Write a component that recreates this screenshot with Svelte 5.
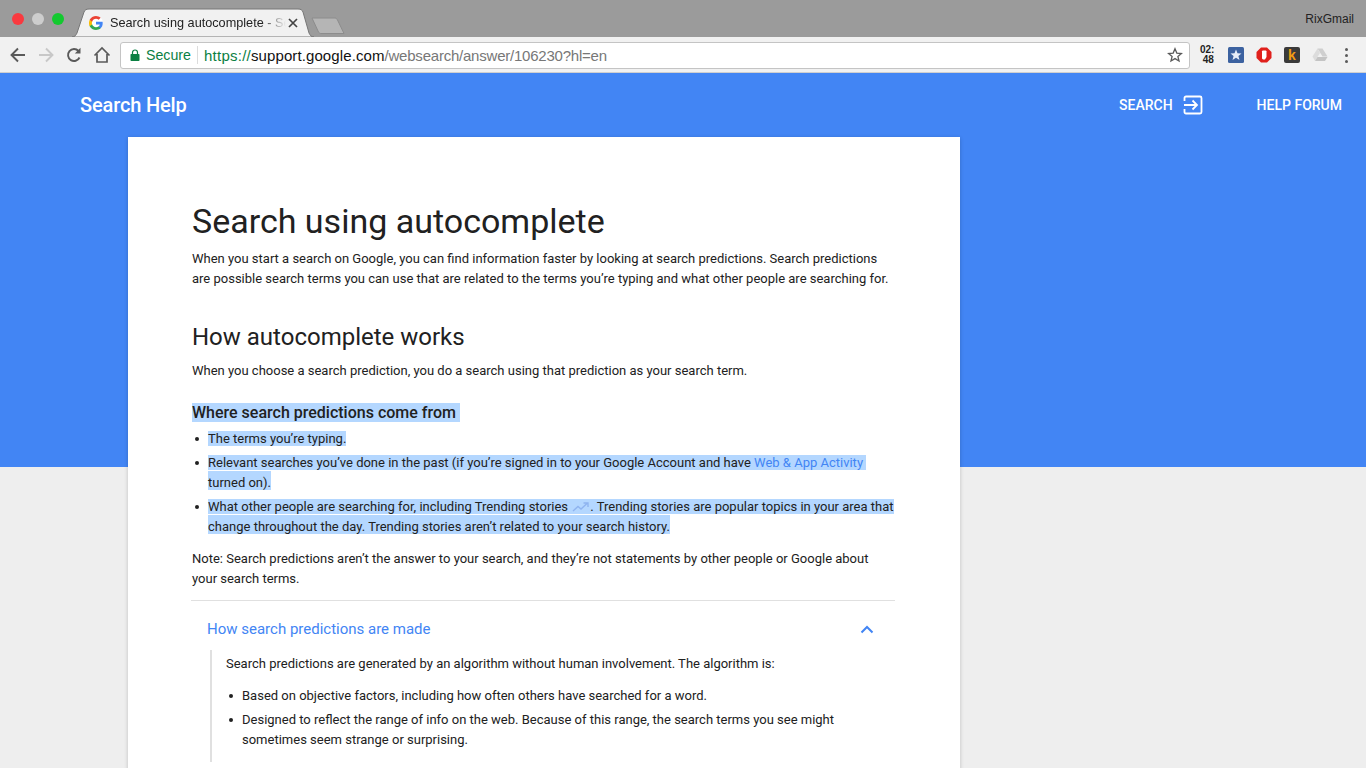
<script>
  const extraLines = [
    'Based on objective factors, including how often others have searched for a word.',
    'Designed to reflect the range of info on the web. Because of this range, the search terms you see might sometimes seem strange or surprising.'
  ];
</script>

<div class="browser">
  <div class="tabbar">
    <div class="lights">
      <span class="light red"></span>
      <span class="light grey"></span>
      <span class="light green"></span>
    </div>
    <div class="tab">
      <svg class="tab-shape" width="242" height="29" viewBox="0 0 242 29">
        <path d="M0 29C3 29 4 27 5 25L12 4C13 2 14 1 17 1H226C229 1 230 2 231 4L237 25C238 27 239 29 242 29Z" fill="#f1f1f1" stroke="#777" stroke-width="1"/>
      </svg>
      <svg class="favicon" width="14" height="14" viewBox="0 0 24 24">
        <circle cx="12" cy="12" r="12" fill="#fff"/>
        <path fill="#4285f4" d="M23.500 12.300c0-.8-.1-1.600-.2-2.300H12v4.500h6.500c-.3 1.500-1.100 2.700-2.400 3.600v3h3.900c2.200-2.100 3.500-5.100 3.500-8.800z"/>
        <path fill="#34a853" d="M12 24c3.200 0 6-1.100 8-2.900l-3.900-3c-1.100.7-2.500 1.200-4.100 1.200-3.100 0-5.800-2.100-6.700-5H1.200v3.100C3.200 21.300 7.300 24 12 24z"/>
        <path fill="#fbbc05" d="M5.300 14.300c-.5-1.500-.5-3.100 0-4.600V6.600H1.200c-1.700 3.300-1.700 7.500 0 10.800z"/>
        <path fill="#ea4335" d="M12 4.700c1.800 0 3.300.6 4.600 1.800l3.400-3.400C17.900 1.200 15.200 0 12 0 7.300 0 3.200 2.700 1.200 6.600l4.100 3.100c.9-2.900 3.600-5 6.700-5z"/>
      </svg>
      <span class="tab-title">Search using autocomplete - Search Help</span>
      <svg class="tab-close" width="10" height="10" viewBox="0 0 10 10">
        <path d="M1 1L9 9M9 1L1 9" stroke="#444" stroke-width="1.700" fill="none"/>
      </svg>
    </div>
    <svg class="newtab" width="36" height="18" viewBox="0 0 36 18">
      <path d="M1 1H24C25 1 26 2 26.500 3L33 16.500H10C9 16.500 8 16 7.500 15Z" fill="#b5b5b5" stroke="#8c8c8c"/>
    </svg>
    <span class="profile">RixGmail</span>
  </div>

  <div class="toolbar">
    <svg class="nav first" width="18" height="18" viewBox="0 0 18 18">
      <path d="M16 9H3M9 2.500L2.500 9L9 15.500" stroke="#5a5a5a" stroke-width="1.900" fill="none"/>
    </svg>
    <svg class="nav" width="18" height="18" viewBox="0 0 18 18">
      <path d="M2 9H15M9 2.500L15.500 9L9 15.500" stroke="#c8c8c8" stroke-width="1.900" fill="none"/>
    </svg>
    <svg class="nav" width="18" height="18" viewBox="0 0 18 18">
      <path d="M14.500 11.500A6 6 0 1 1 13.500 5" stroke="#5a5a5a" stroke-width="1.900" fill="none"/>
      <path d="M15.500 1.800V7.500H9.800Z" fill="#5a5a5a"/>
    </svg>
    <svg class="nav" width="18" height="18" viewBox="0 0 18 18">
      <path d="M1.500 9.500L9 2L16.500 9.500M4 8V16H14V8" stroke="#5a5a5a" stroke-width="1.700" fill="none"/>
    </svg>
    <div class="omnibox">
      <svg class="lock" width="10" height="12" viewBox="0 0 10 12">
        <path d="M2.500 5V3.500a2.500 2.500 0 0 1 5 0V5" stroke="#0b8043" stroke-width="1.200" fill="none"/>
        <rect x="0.500" y="5" width="9" height="7" rx="0.800" fill="#0b8043"/>
      </svg>
      <span class="secure">Secure</span>
      <span class="sep"></span>
      <span class="url"><span class="https">https://</span><span class="host">support.google.com</span><span class="path">/websearch/answer/106230?hl=en</span></span>
      <svg class="star" width="16" height="16" viewBox="0 0 16 16">
        <path d="M8 1.800L9.800 6.100L14.400 6.500L10.900 9.500L12 14L8 11.600L4 14L5.100 9.500L1.600 6.500L6.200 6.100Z" stroke="#5a5a5a" stroke-width="1.300" fill="none"/>
      </svg>
    </div>
    <div class="extensions">
      <span class="clock">02:<br />&nbsp;48</span>
      <svg class="ext" width="16" height="16" viewBox="0 0 16 16">
        <rect width="16" height="16" rx="1.500" fill="#3c62a0"/>
        <path d="M8 2.500L9.500 6.300L13.500 6.500L10.400 9L11.500 13L8 10.800L4.500 13L5.600 9L2.500 6.500L6.500 6.300Z" fill="#e8eef8"/>
      </svg>
      <svg class="ext" width="16" height="16" viewBox="0 0 16 16">
        <path d="M5 .5H11L15.500 5V11L11 15.500H5L.5 11V5Z" fill="#e0201c"/>
        <path d="M6 11.500V5a1 1 0 0 1 1-1.500h2.500a1 1 0 0 1 1 1.500V10L9 12.500H7Z" fill="#fff"/>
      </svg>
      <span class="k-ext">k</span>
      <svg class="ext" width="16" height="14" viewBox="0 0 16 14">
        <path d="M5.500 .5H10.500L15.500 8.500H10.500Z" fill="#cfcfcf"/>
        <path d="M5.500 .5L.5 8.500L3 13L8 5Z" fill="#dcdcdc"/>
        <path d="M5.500 9H15.500L13 13H3Z" fill="#c4c4c4"/>
      </svg>
      <span class="dots"><i></i><i></i><i></i></span>
    </div>
  </div>
</div>

<div class="page">
  <header class="help-header">
    <a class="help-title" href="#top">Search Help</a>
    <div class="help-actions">
      <span class="action">SEARCH</span>
      <svg class="search-icon" width="20" height="20" viewBox="0 0 20 20">
        <path d="M1.500 6V3a1.500 1.500 0 0 1 1.500-1.500H17A1.500 1.500 0 0 1 18.500 3V17A1.500 1.500 0 0 1 17 18.500H3A1.500 1.500 0 0 1 1.500 17V14" stroke="#fff" stroke-width="1.800" fill="none"/>
        <path d="M1 10H13.500M9.500 5.500L14 10L9.500 14.500" stroke="#fff" stroke-width="1.800" fill="none"/>
      </svg>
      <span class="action forum">HELP FORUM</span>
    </div>
  </header>

  <article class="card">
    <h1>Search using autocomplete</h1>
    <p class="intro">When you start a search on Google, you can find information faster by looking at search predictions. Search predictions are possible search terms you can use that are related to the terms you’re typing and what other people are searching for.</p>

    <h2>How autocomplete works</h2>
    <p>When you choose a search prediction, you do a search using that prediction as your search term.</p>

    <h3><mark>Where search predictions come from&nbsp;</mark></h3>
    <ul class="selected">
      <li><mark>The terms you’re typing.</mark></li>
      <li><mark>Relevant searches you’ve done in the past (if you’re signed in to your Google Account and have <a href="#top">Web &amp; App Activity</a>&nbsp;</mark><br /><mark class="cont">turned on).</mark></li>
      <li><mark>What other people are searching for, including Trending stories <svg class="trend" width="18" height="10" viewBox="0 0 18 10"><path d="M1 9L6 4.500L9 7L15 1.500M11.500 1H16V5" stroke="#8fb4f0" stroke-width="1.400" fill="none"/></svg>. Trending stories are popular topics in your area that</mark><br /><mark class="cont">change throughout the day. Trending stories aren’t related to your search history.</mark></li>
    </ul>

    <p class="note">Note: Search predictions aren’t the answer to your search, and they’re not statements by other people or Google about your search terms.</p>

    <section class="accordion">
      <div class="accordion-head">
        <span>How search predictions are made</span>
        <svg width="14" height="9" viewBox="0 0 14 9">
          <path d="M1.500 7.500L7 2L12.500 7.500" stroke="#4285f4" stroke-width="2" fill="none"/>
        </svg>
      </div>
      <div class="accordion-body">
        <p>Search predictions are generated by an algorithm without human involvement. The algorithm is:</p>
        <ul>
          {#each extraLines as line}
            <li>{line}</li>
          {/each}
        </ul>
      </div>
    </section>
  </article>
</div>

<style>
  :global(body) {
    margin: 0;
    height: 768px;
    overflow: hidden;
    background: #eee;
    font-family: Roboto, "Liberation Sans", sans-serif;
  }

  .tabbar {
    display: flex;
    align-items: flex-end;
    height: 37px;
    background: #9b9b9b;
    position: relative;
  }

  .lights {
    display: flex;
    gap: 8px;
    align-self: flex-start;
    margin: 13px 0 0 12px;
  }

  .light {
    width: 12px;
    height: 12px;
    border-radius: 50%;
  }

  .red { background: #f9393f; }
  .grey { background: #cdcdcd; }
  .green { background: #13c92f; }

  .tab {
    position: relative;
    display: flex;
    align-items: center;
    width: 242px;
    height: 29px;
    margin-left: 8px;
    flex-shrink: 0;
  }

  .tab-shape {
    position: absolute;
    left: 0;
    top: 0;
  }

  .favicon {
    position: relative;
    margin-left: 17px;
    flex-shrink: 0;
  }

  .tab-title {
    position: relative;
    width: 176px;
    margin-left: 7px;
    overflow: hidden;
    white-space: nowrap;
    font-family: "Liberation Sans", Arial, sans-serif;
    font-size: 12.700px;
    color: #222;
    -webkit-mask-image: linear-gradient(to right, #000 86%, transparent 100%);
    mask-image: linear-gradient(to right, #000 86%, transparent 100%);
  }

  .tab-close {
    position: relative;
    margin-left: 2px;
    flex-shrink: 0;
  }

  .newtab {
    align-self: flex-end;
    margin: 0 0 2px -3px;
  }

  .profile {
    margin-left: auto;
    align-self: flex-start;
    margin-top: 12px;
    padding-right: 12px;
    font-family: "Liberation Sans", Arial, sans-serif;
    font-size: 12px;
    color: #222;
  }

  .toolbar {
    display: flex;
    align-items: center;
    height: 36px;
    background: #f1f1f1;
    box-shadow: inset 0 -1px 0 #cfcfcf;
  }

  .nav {
    margin-left: 10px;
    flex-shrink: 0;
  }

  .nav.first {
    margin-left: 9px;
  }

  .omnibox {
    display: flex;
    align-items: center;
    width: 1070px;
    height: 27px;
    margin-left: 9px;
    background: #fff;
    border: 1px solid #c4c4c4;
    border-radius: 3px;
    box-sizing: border-box;
    font-family: "Liberation Sans", Arial, sans-serif;
    font-size: 15px;
  }

  .lock {
    margin-left: 9px;
  }

  .secure {
    margin-left: 6px;
    font-size: 14.200px;
    color: #0b8043;
  }

  .sep {
    width: 1px;
    height: 18px;
    margin: 0 6px;
    background: #dcdcdc;
  }

  .url {
    white-space: nowrap;
  }

  .https {
    color: #0b8043;
    letter-spacing: 0.250px;
  }

  .host {
    color: #111;
    letter-spacing: 0.100px;
  }

  .path {
    color: #777;
    letter-spacing: -0.220px;
  }

  .star {
    margin-left: auto;
    margin-right: 6px;
  }

  .extensions {
    display: flex;
    align-items: center;
    margin-left: 10px;
  }

  .clock {
    width: 16px;
    font-family: "Liberation Sans", Arial, sans-serif;
    font-size: 10px;
    font-weight: 700;
    line-height: 10px;
    color: #222;
    white-space: nowrap;
  }

  .ext {
    margin-left: 12px;
  }

  .k-ext {
    width: 16px;
    height: 16px;
    margin-left: 12px;
    border-radius: 2px;
    background: #3a3a3a;
    color: #f39c12;
    font-family: "Liberation Sans", Arial, sans-serif;
    font-size: 14px;
    font-weight: 700;
    line-height: 16px;
    text-align: center;
  }

  .dots {
    display: flex;
    flex-direction: column;
    gap: 3px;
    margin-left: 17px;
  }

  .dots i {
    width: 3px;
    height: 3px;
    border-radius: 50%;
    background: #5a5a5a;
  }

  .page {
    background: linear-gradient(#4285f4 394px, #eee 394px);
    height: 695px;
    overflow: hidden;
  }

  .help-header {
    display: flex;
    align-items: center;
    justify-content: space-between;
    height: 64px;
    padding: 0 24px 0 80px;
  }

  .help-title {
    color: #fff;
    font-size: 20px;
    font-weight: 500;
    text-decoration: none;
    letter-spacing: -0.150px;
  }

  .help-actions {
    display: flex;
    align-items: center;
    color: #fff;
    font-size: 14px;
    font-weight: 500;
  }

  .search-icon {
    margin-left: 10px;
  }

  .forum {
    margin-left: 54px;
  }

  .card {
    width: 832px;
    box-sizing: border-box;
    margin-left: 128px;
    padding: 62px 65px 0 64px;
    min-height: 700px;
    background: #fff;
    box-shadow: 0 1px 4px rgba(0, 0, 0, 0.2);
    color: #212121;
    font-size: 13px;
    line-height: 20px;
  }

  h1 {
    margin: 0;
    font-size: 34px;
    font-weight: 400;
    line-height: 44px;
  }

  p {
    margin: 0;
  }

  .intro {
    margin-top: 6px;
  }

  h2 {
    margin: 32px 0 0;
    font-size: 24px;
    font-weight: 400;
    line-height: 32px;
  }

  h2 + p {
    margin-top: 8px;
  }

  h3 {
    margin: 22px 0 0;
    font-size: 16px;
    font-weight: 500;
    line-height: 20px;
  }

  mark {
    background: #b4d7ff;
    color: inherit;
  }

  mark.cont {
    padding-top: 4px;
  }

  ul {
    margin: 6px 0 0;
    padding: 0 0 0 16px;
    list-style: none;
  }

  li {
    position: relative;
    margin-bottom: 4px;
  }

  li::before {
    content: "";
    position: absolute;
    left: -13px;
    top: 8px;
    width: 4px;
    height: 4px;
    border-radius: 50%;
    background: #212121;
  }

  a {
    color: #4285f4;
    text-decoration: none;
  }

  .trend {
    vertical-align: -1px;
    margin: 0 0 0 1px;
  }

  .note {
    margin-top: 12px;
  }

  .accordion {
    margin: 11px 0 0 -1px;
    border-top: 1px solid #e0e0e0;
  }

  .accordion-head {
    display: flex;
    align-items: center;
    justify-content: space-between;
    height: 56px;
    padding: 0 21px 0 16px;
    color: #4285f4;
    font-size: 15px;
  }

  .accordion-body {
    margin-left: 19px;
    padding: 0 0 8px 14px;
    border-left: 2px solid #e0e0e0;
    margin-top: -7px;
  }

  .accordion-body p {
    padding-top: 4px;
  }

  .accordion-body ul {
    margin-top: 12px;
  }
</style>
